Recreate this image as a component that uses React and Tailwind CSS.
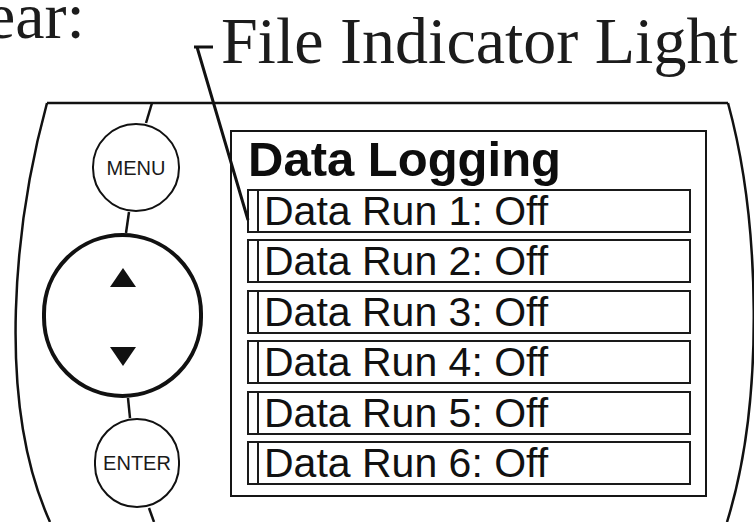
const runs = [1, 2, 3, 4, 5, 6];

function Triangle({ down }) {
  return (
    <svg width="26" height="19" viewBox="0 0 26 19" className="block">
      <polygon
        points={down ? "0,0 26,0 13,19" : "13,0 26,19 0,19"}
        fill="#111"
      />
    </svg>
  );
}

function RoundButton({ label, className }) {
  return (
    <div
      className={`flex items-center justify-center rounded-full border-[2.5px] border-[#111] bg-white text-[20px] leading-none text-[#1a1a1a] ${className}`}
    >
      {label}
    </div>
  );
}

export default function App() {
  return (
    <div className="relative h-[522px] w-[754px] overflow-hidden bg-white font-['Liberation_Sans',Arial,sans-serif]">
      {/* caption line */}
      <div className="flex h-[103px] items-start whitespace-nowrap font-['Liberation_Serif','Times_New_Roman',serif] text-[66px] leading-none text-[#1c1c1c]">
        <span className="-ml-[14px] -mt-[17px] shrink-0">ear:</span>
        <span className="ml-[136px] mt-[8px] shrink-0">File Indicator Light</span>
      </div>

      {/* device */}
      <div className="flex h-[419px]">
        <div className="flex w-[230px] shrink-0 flex-col">
          <RoundButton label="MENU" className="ml-[92px] mt-[20px] h-[89px] w-[88px]" />
          <div className="ml-[42px] mt-[21px] flex h-[165px] w-[161px] flex-col items-center justify-between rounded-full border-4 border-[#111] bg-white pb-[28px] pt-[31px]">
            <Triangle />
            <Triangle down />
          </div>
          <RoundButton label="ENTER" className="ml-[94px] mt-[20px] h-[90px] w-[86px]" />
        </div>

        <div className="mt-[27px] flex h-[367px] w-[477px] shrink-0 flex-col border-2 border-[#151515] pl-[15px] pr-[14px] pt-[3px]">
          <h1 className="pl-[1px] text-[49px] font-bold leading-none text-[#0d0d0d]">Data Logging</h1>
          <div className="mt-[5px] flex flex-col gap-[6.4px]">
            {runs.map((n) => (
              <div key={n} className="flex h-[44px] border-2 border-[#1a1a1a]">
                <div className="w-[10px] shrink-0 border-r-2 border-[#1a1a1a]" />
                <span className="pl-[5px] text-[41px] leading-none text-[#111]">
                  Data Run {n}: Off
                </span>
              </div>
            ))}
          </div>
        </div>
      </div>

      {/* outline, connectors and leader line */}
      <svg
        className="pointer-events-none absolute inset-0"
        width="754"
        height="522"
        viewBox="0 0 754 522"
        fill="none"
        stroke="#111"
      >
        <path d="M47 103 L728 103" strokeWidth="2.5" />
        <path d="M47 103 C15 220 -5 400 50 522" strokeWidth="2.5" />
        <path d="M728 103 C760 220 765 400 727 522" strokeWidth="2.5" />
        <path d="M152 103 L146 123" strokeWidth="2.5" />
        <path d="M129 212 L126 233" strokeWidth="2.5" />
        <path d="M128 398 L130 418" strokeWidth="2.5" />
        <path d="M149 508 L154 522" strokeWidth="2.5" />
        <path d="M194 47 L213 47 M197 47 L248 220" strokeWidth="3" />
      </svg>
    </div>
  );
}
